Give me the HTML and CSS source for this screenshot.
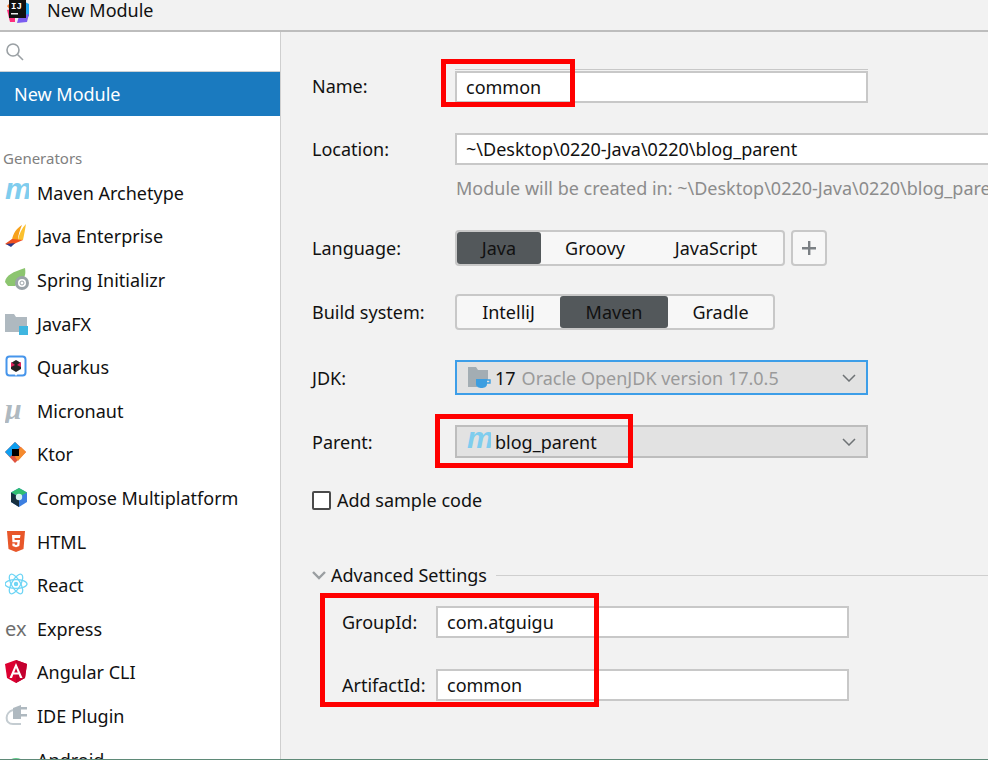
FILE: index.html
```html
<!DOCTYPE html>
<html lang="en">
<head>
  <meta charset="UTF-8">
  <title>New Module</title>
  <link rel="stylesheet" href="styles.css">
</head>
<body>
  <div class="titlebar">
    <svg class="app-icon" width="24" height="24" viewBox="0 0 24 24">
      <path d="M2 6 L8 0 L14 2 L8 14 Z" fill="#fe7a2f"/>
      <path d="M2 10 L10 8 L10 22 L5 22 Z" fill="#fe2f7e"/>
      <path d="M16 0 L24 4 L24 16 L18 20 Z" fill="#1fa6f0"/>
      <path d="M14 16 L24 14 L22 22 L12 23 Z" fill="#7b5cf0"/>
      <rect x="4" y="0" width="17" height="18" fill="#111"/>
      <text class="app-icon-text" x="6" y="9">IJ</text>
      <rect x="6" y="13" width="7" height="1.5" fill="#eee"/>
    </svg>
    <span class="title-text">New Module</span>
  </div>

  <div class="main">
    <div class="sidebar">
      <div class="search">
        <svg width="20" height="20" viewBox="0 0 20 20" fill="none" stroke="#9aa0a4" stroke-width="1.6">
          <circle cx="8" cy="8" r="6"/>
          <path d="M12.5 12.5 L18 18"/>
        </svg>
      </div>
      <div class="nav-selected">New Module</div>
      <div class="group-title">Generators</div>

      <div class="nav-item">
        <svg class="nav-icon" viewBox="0 0 24 24"><text class="maven-glyph" x="0" y="18">m</text></svg>
        Maven Archetype
      </div>
      <div class="nav-item">
        <svg class="nav-icon" viewBox="0 0 24 24">
          <path d="M17 1 C12 4 8 9 7 16 L13 16 C13 11 15 6 17 1 Z" fill="#f7a11b"/>
          <path d="M21 0 C20 6 19 11 18 16 L13 16 C14 10 17 4 21 0 Z" fill="#fbc02d"/>
          <path d="M0 20 L7 15 L18 16 L11 19 L6 22 Z" fill="#f0501e"/>
          <path d="M1 20 L10 19 L6 23 Z" fill="#2b3a8c"/>
        </svg>
        Java Enterprise
      </div>
      <div class="nav-item">
        <svg class="nav-icon" viewBox="0 0 24 24">
          <path d="M0 14 C1 7 8 4 20 0 C21 6 20 10 16 12 L10 18 L3 18 Z" fill="#8cc56f"/>
          <circle cx="17" cy="15" r="7" fill="#9aa3a8"/>
          <circle cx="17" cy="15" r="4" fill="#fff"/>
          <circle cx="17" cy="15" r="2" fill="none" stroke="#9aa3a8"/>
        </svg>
        Spring Initializr
      </div>
      <div class="nav-item">
        <svg class="nav-icon" viewBox="0 0 24 24">
          <path d="M0 2 L9 2 L11 5 L22 5 L22 20 L0 20 Z" fill="#afb9c0"/>
          <rect x="14" y="14" width="9" height="9" fill="#40b6e0"/>
        </svg>
        JavaFX
      </div>
      <div class="nav-item">
        <svg class="nav-icon" viewBox="0 0 24 24">
          <rect x="1.5" y="1.5" width="19" height="19" rx="3" fill="#fff" stroke="#4695eb" stroke-width="2"/>
          <path d="M11 5 L16 8 L16 14 L11 17 L6 14 L6 8 Z" fill="#222"/>
          <path d="M6 7 L10 10 L6 12 Z" fill="#e0245e"/>
          <path d="M16 7 L12 10 L16 12 Z" fill="#e0245e"/>
          <path d="M11 21 L9 18 L13 18 Z" fill="#fff"/>
        </svg>
        Quarkus
      </div>
      <div class="nav-item">
        <svg class="nav-icon" viewBox="0 0 24 24"><text class="micronaut-glyph" x="0" y="20">μ</text></svg>
        Micronaut
      </div>
      <div class="nav-item">
        <svg class="nav-icon" viewBox="0 0 24 24">
          <path d="M10 0 L21 10 L10 21 L0 10 Z" fill="#e0533f"/>
          <path d="M10 0 L15 5 L5 15 L0 10 Z" fill="#0e9ef0"/>
          <path d="M16 5 L21 10 L13 19 L10 15 Z" fill="#f58a2c"/>
          <rect x="7" y="7" width="7" height="7" fill="#000"/>
        </svg>
        Ktor
      </div>
      <div class="nav-item">
        <svg class="nav-icon" viewBox="0 0 24 24">
          <path d="M14 2 L22 6.5 L22 16 L14 21 L6 16 L6 6.5 Z" fill="#3d7fe0"/>
          <path d="M14 2 L22 6.5 L14 11 L6 6.5 Z" fill="#2fbf71"/>
          <path d="M6 6.5 L14 11 L14 21 L6 16 Z" fill="#17303f"/>
          <circle cx="14" cy="11" r="3.2" fill="#d8f3f0"/>
        </svg>
        Compose Multiplatform
      </div>
      <div class="nav-item">
        <svg class="nav-icon" viewBox="0 0 24 24">
          <path d="M2 1 L20 1 L18.5 19 L11 22 L3.5 19 Z" fill="#e8572a"/>
          <path d="M7 5 L15.5 5 L15 8 L9.5 8 L9.7 10 L15 10 L14.3 16 L11 17.3 L7.5 16 L7.3 13.5 L9.7 13.5 L9.8 14.5 L11 15 L12.2 14.5 L12.4 12.3 L7.4 12.3 Z" fill="#fff"/>
        </svg>
        HTML
      </div>
      <div class="nav-item">
        <svg class="nav-icon" viewBox="0 0 24 24" fill="none" stroke="#6fd5f5" stroke-width="1.3">
          <ellipse cx="11" cy="11" rx="11" ry="4.4"/>
          <ellipse cx="11" cy="11" rx="11" ry="4.4" transform="rotate(60 11 11)"/>
          <ellipse cx="11" cy="11" rx="11" ry="4.4" transform="rotate(120 11 11)"/>
          <circle cx="11" cy="11" r="2.2" fill="#6fd5f5" stroke="none"/>
        </svg>
        React
      </div>
      <div class="nav-item">
        <span class="ex-glyph">ex</span>
        Express
      </div>
      <div class="nav-item">
        <svg class="nav-icon" viewBox="0 0 24 24">
          <path d="M11 0 L22 4 L20 18 L11 23 L2 18 L0 4 Z" fill="#dd0031"/>
          <path d="M11 0 L22 4 L20 18 L11 23 Z" fill="#c3002f"/>
          <path d="M11 3 L17.5 18 L15 18 L13.7 14.6 L8.3 14.6 L7 18 L4.5 18 Z M11 8 L9.2 12.5 L12.8 12.5 Z" fill="#fff" fill-rule="evenodd"/>
        </svg>
        Angular CLI
      </div>
      <div class="nav-item">
        <svg class="nav-icon" viewBox="0 0 24 24">
          <path d="M8 4 L16 1 L16 15 L8 15 Z" fill="#afb9c0"/>
          <rect x="16" y="3" width="6" height="2.5" fill="#afb9c0"/>
          <rect x="16" y="10" width="6" height="2.5" fill="#afb9c0"/>
          <path d="M8 6 C0 8 -1 20 8 20 L16 20" fill="none" stroke="#c4ccd1" stroke-width="2"/>
        </svg>
        IDE Plugin
      </div>
      <div class="nav-item">
        <svg class="nav-icon" viewBox="0 0 24 24"><path d="M3 16 C3 8 19 8 19 16 Z" fill="#5fc98a"/></svg>
        Android
      </div>
    </div>

    <div class="panel">
      <div class="form-row name-row">
        <label>Name:</label>
        <div class="name-field">
          <input class="text-field" type="text" value="common">
        </div>
      </div>

      <div class="form-row location-row">
        <label>Location:</label>
        <input class="text-field location-field" type="text" value="~\Desktop\0220-Java\0220\blog_parent">
      </div>
      <div class="hint">Module will be created in: ~\Desktop\0220-Java\0220\blog_parent</div>

      <div class="form-row language-row">
        <label>Language:</label>
        <div class="seg-wrap">
          <div class="seg">
            <span class="seg-btn seg-on lang-java">Java</span>
            <span class="seg-btn lang-groovy">Groovy</span>
            <span class="seg-btn lang-js">JavaScript</span>
          </div>
          <span class="plus-btn">
            <svg width="16" height="16" viewBox="0 0 16 16"><path d="M7 1 H9.4 V7 H15 V9.4 H9.4 V15 H7 V9.4 H1 V7 H7 Z" fill="#7b8084"/></svg>
          </span>
        </div>
      </div>

      <div class="form-row build-row">
        <label>Build system:</label>
        <div class="seg">
          <span class="seg-btn build-idea">IntelliJ</span>
          <span class="seg-btn seg-on build-maven">Maven</span>
          <span class="seg-btn build-gradle">Gradle</span>
        </div>
      </div>

      <div class="form-row jdk-row">
        <label>JDK:</label>
        <div class="combo combo-focus">
          <svg class="combo-icon" viewBox="0 0 24 24">
            <path d="M1 1 L9 1 L11 4 L21 4 L21 14 L10 14 L10 21 L1 21 Z" fill="#a3adb3"/>
            <path d="M9 13 H20 V18 C20 21 17 22 14.5 22 C12 22 9 21 9 18 Z" fill="#3d9ee0"/>
            <path d="M20 14 H23 V17 H20" fill="none" stroke="#3d9ee0" stroke-width="1.4"/>
          </svg>
          <span class="combo-text">17</span>
          <span class="combo-muted">Oracle OpenJDK version 17.0.5</span>
          <svg class="combo-arrow" width="14" height="8" viewBox="0 0 14 8" fill="none" stroke="#6e7275" stroke-width="1.5"><path d="M1 1 L7 7 L13 1"/></svg>
        </div>
      </div>

      <div class="form-row parent-row">
        <label>Parent:</label>
        <div class="combo">
          <svg class="combo-icon" viewBox="0 0 24 24"><text class="maven-glyph" x="0" y="18">m</text></svg>
          <span class="combo-text">blog_parent</span>
          <svg class="combo-arrow" width="14" height="8" viewBox="0 0 14 8" fill="none" stroke="#6e7275" stroke-width="1.5"><path d="M1 1 L7 7 L13 1"/></svg>
        </div>
      </div>

      <div class="check-row">
        <span class="checkbox"></span>
        Add sample code
      </div>

      <div class="advanced">
        <svg width="14" height="9" viewBox="0 0 14 9" fill="none" stroke="#9a9ea1" stroke-width="2.4"><path d="M1 1 L7 7 L13 1"/></svg>
        <span>Advanced Settings</span>
        <div class="advanced-line"></div>
      </div>

      <div class="sub-row group-row">
        <label>GroupId:</label>
        <input class="text-field sub-field" type="text" value="com.atguigu">
      </div>
      <div class="sub-row artifact-row">
        <label>ArtifactId:</label>
        <input class="text-field sub-field" type="text" value="common">
      </div>

      <!-- Red annotation boxes drawn on top of the dialog -->
      <div class="mark mark-name"></div>
      <div class="mark mark-parent"></div>
      <div class="mark mark-advanced"></div>
    </div>
  </div>
  <div class="bottom-edge"></div>
</body>
</html>
```

FILE: styles.css
```css
/* General Styles */
* {
  box-sizing: border-box;
}

html, body {
  margin: 0;
  padding: 0;
  height: 768px;
  overflow: hidden;
}

body {
  font-family: "Noto Sans", "Open Sans", sans-serif;
  font-size: 18px;
  color: #111;
  background: #fff;
  display: flex;
  flex-direction: column;
}

/* Title bar */
.titlebar {
  height: 32px;
  flex: none;
  display: flex;
  align-items: flex-start;
  background: #f2f2f2;
  border-bottom: 2px solid #bdbdbd;
}

.app-icon {
  margin: 0 0 0 5px;
}

.app-icon-text {
  font-family: "Liberation Mono", monospace;
  font-size: 9px;
  font-weight: bold;
  fill: #fff;
}

.title-text {
  margin-left: 18px;
  line-height: 20px;
}

.main {
  height: 727px;
  flex: none;
  display: flex;
  overflow: hidden;
}

.bottom-edge {
  flex: 1;
  border-top: 1px solid #5f8a78;
  background: #fff;
}

/* Sidebar */
.sidebar {
  width: 281px;
  flex: none;
  background: #fff;
  border-right: 1px solid #cfcfcf;
  overflow: hidden;
}

.search {
  height: 40px;
  padding: 10px 0 0 5px;
  border-bottom: 1px solid #c9d0d5;
}

.search svg {
  display: block;
}

.nav-selected {
  height: 44px;
  line-height: 44px;
  padding-left: 14px;
  background: #1a7abf;
  color: #fff;
}

.group-title {
  margin-top: 29px;
  height: 26px;
  line-height: 26px;
  padding-left: 3px;
  font-size: 15px;
  color: #808080;
}

.nav-item {
  height: 43.6px;
  display: flex;
  align-items: center;
  padding-left: 5px;
  white-space: nowrap;
}

.nav-icon {
  width: 24px;
  height: 24px;
  margin-right: 8px;
  flex: none;
}

.maven-glyph {
  font-family: "Liberation Sans", sans-serif;
  font-size: 30px;
  font-weight: bold;
  font-style: italic;
  fill: #7fcdee;
}

.micronaut-glyph {
  font-family: "Liberation Serif", serif;
  font-size: 30px;
  font-weight: bold;
  font-style: italic;
  fill: #afb9c0;
}

.ex-glyph {
  width: 24px;
  margin-right: 8px;
  flex: none;
  font-size: 20px;
  color: #6e6e6e;
  line-height: 20px;
}

/* Right panel */
.panel {
  flex: 1;
  position: relative;
  background: #f2f2f2;
  padding-left: 31px;
  overflow: hidden;
}

.form-row {
  display: flex;
  align-items: center;
}

.form-row label {
  width: 143px;
  flex: none;
}

.text-field {
  display: block;
  height: 32px;
  padding: 0 9px;
  border: 2px solid #c8c8c8;
  background: #fff;
  font: inherit;
  color: #111;
  outline: none;
}

.name-row {
  margin-top: 37px;
}

.name-field {
  border-top: 1px solid #c8c8c8;
  padding-top: 1px;
}

.name-field .text-field {
  width: 413px;
}

.location-row {
  margin-top: 30px;
}

.location-field {
  width: 600px;
  flex: none;
}

.hint {
  margin: 9px 0 0 144px;
  height: 28px;
  line-height: 28px;
  color: #8c8c8c;
  white-space: nowrap;
}

.language-row {
  margin-top: 28px;
}

.build-row {
  margin-top: 28px;
}

.seg-wrap {
  display: flex;
  gap: 6px;
}

.seg {
  display: flex;
  height: 36px;
  border: 2px solid #c8c8c8;
  border-radius: 4px;
  background: #f7f7f7;
}

.seg-btn {
  display: flex;
  align-items: center;
  justify-content: center;
  border-radius: 3px;
}

.seg-on {
  background: #53585b;
}

.lang-java { width: 84px; }
.lang-groovy { width: 108px; }
.lang-js { width: 134px; }
.build-idea { width: 103px; }
.build-maven { width: 108px; }
.build-gradle { width: 105px; }

.plus-btn {
  width: 36px;
  height: 36px;
  display: flex;
  align-items: center;
  justify-content: center;
  border: 2px solid #c8c8c8;
  border-radius: 4px;
  background: #f7f7f7;
}

.jdk-row {
  margin-top: 30px;
}

.parent-row {
  margin-top: 30px;
}

.combo {
  width: 413px;
  height: 33px;
  display: flex;
  align-items: center;
  padding: 0 8px 0 10px;
  background: #e2e2e2;
  border: 2px solid #bdbdbd;
  white-space: nowrap;
}

.combo-focus {
  height: 35px;
  border-color: #3d9ee8;
}

.combo-icon {
  width: 24px;
  height: 24px;
  margin-right: 4px;
  flex: none;
}

.combo-muted {
  margin-left: 6px;
  color: #9a9a9a;
}

.combo-arrow {
  margin-left: auto;
  margin-right: 2px;
}

.check-row {
  margin-top: 32px;
  display: flex;
  align-items: center;
  gap: 6px;
  height: 20px;
}

.checkbox {
  width: 19px;
  height: 19px;
  border: 2px solid #4a4a4a;
  border-radius: 2px;
  background: #fff;
}

.advanced {
  margin-top: 53px;
  display: flex;
  align-items: center;
  gap: 5px;
  height: 24px;
}

.advanced span {
  white-space: nowrap;
}

.advanced-line {
  flex: 1;
  height: 1px;
  margin-left: 4px;
  background: #cfcfcf;
}

.sub-row {
  display: flex;
  align-items: center;
  padding-left: 30px;
}

.sub-row label {
  width: 94px;
  flex: none;
}

.sub-field {
  width: 413px;
}

.group-row {
  margin-top: 19px;
}

.artifact-row {
  margin-top: 31px;
}

/* Red annotation boxes */
.mark {
  position: absolute;
  border: 5px solid #f00;
}

.mark-name {
  left: 160px;
  top: 27px;
  width: 134px;
  height: 48px;
}

.mark-parent {
  left: 154px;
  top: 382px;
  width: 198px;
  height: 54px;
}

.mark-advanced {
  left: 39px;
  top: 561px;
  width: 279px;
  height: 114px;
}
```
